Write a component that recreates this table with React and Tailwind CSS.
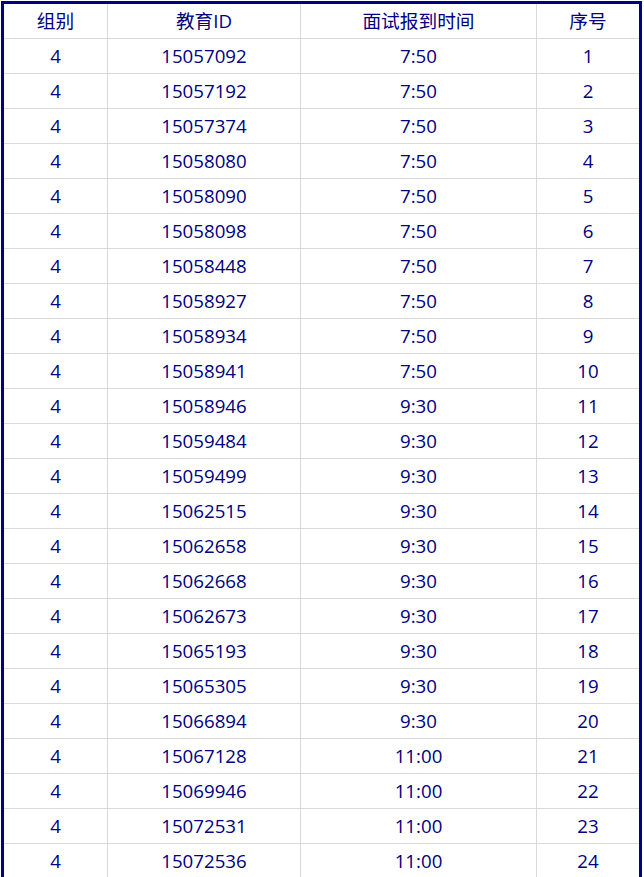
import React from "react";

const ids = [
  "15057092", "15057192", "15057374", "15058080", "15058090", "15058098",
  "15058448", "15058927", "15058934", "15058941", "15058946", "15059484",
  "15059499", "15062515", "15062658", "15062668", "15062673", "15065193",
  "15065305", "15066894", "15067128", "15069946", "15072531", "15072536",
];

const timeFor = (i) => (i < 10 ? "7:50" : i < 20 ? "9:30" : "11:00");

const Row = ({ cells }) => (
  <div className="flex h-[35px] border-b border-[#d9d9d9]">
    <div className="w-[104px] border-r border-[#d9d9d9] flex items-center justify-center">{cells[0]}</div>
    <div className="w-[193px] border-r border-[#d9d9d9] flex items-center justify-center">{cells[1]}</div>
    <div className="w-[236px] border-r border-[#d9d9d9] flex items-center justify-center">{cells[2]}</div>
    <div className="w-[102px] flex items-center justify-center">{cells[3]}</div>
  </div>
);

export default function App() {
  return (
    <div className="bg-white w-[644px] h-[877px] overflow-hidden pt-[1px] pl-[1px]">
      <div
        className="w-[641px] border-[3px] border-b-0 border-[#000080] text-[#000080] text-[18.7px] leading-none"
        style={{ fontFamily: '"Open Sans", "Noto Sans CJK SC", sans-serif' }}
      >
        <Row cells={["组别", "教育ID", "面试报到时间", "序号"]} />
        {ids.map((id, i) => (
          <Row key={id} cells={["4", id, timeFor(i), String(i + 1)]} />
        ))}
      </div>
    </div>
  );
}
